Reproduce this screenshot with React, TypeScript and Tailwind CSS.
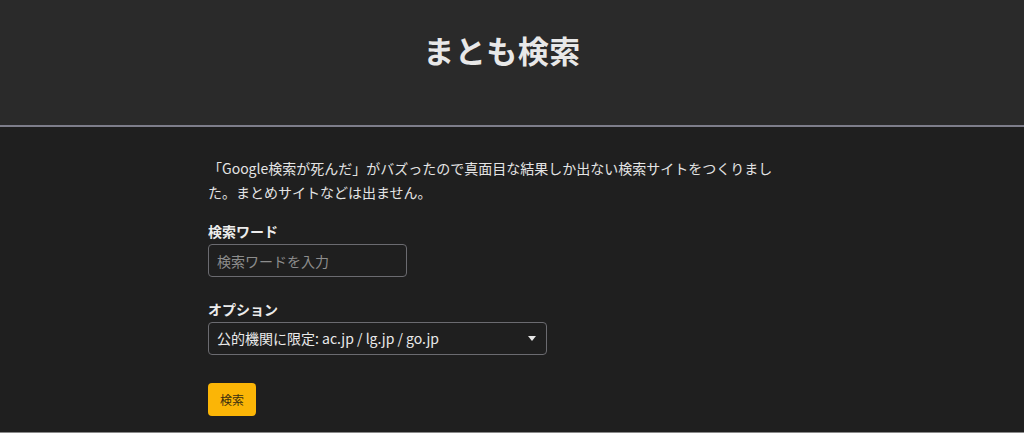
import { useState } from 'react';

const font = { fontFamily: '"Noto Sans CJK JP", "Noto Sans", sans-serif' };

const App = () => {
  const [query, setQuery] = useState('');
  const [option, setOption] = useState('gov');

  return (
    <div className="flex h-screen flex-col bg-[#1f1f1f] text-[#e6e6e6]" style={font}>
      <header className="flex h-[127px] shrink-0 items-center justify-center border-b-2 border-[#7d7d8a] bg-[#2a2a2a] pb-[24px] pr-[20px]">
        <h1 className="text-[31px] font-bold tracking-[0.5px] text-[#e8e8e8]">まとも検索</h1>
      </header>

      <main className="flex-1">
        <div className="mx-auto w-[608px] pt-[29px]">
          <p className="max-w-[576px] text-[14px] leading-[24px] text-[#e4e4e4]">
            「Google検索が死んだ」がバズったので真面目な結果しか出ない検索サイトをつくりました。まとめサイトなどは出ません。
          </p>

          <form onSubmit={(e) => e.preventDefault()}>
            <label className="mt-[17px] block text-[14px] font-bold leading-[20px] text-[#ececec]">検索ワード</label>
            <input
              type="text"
              value={query}
              onChange={(e) => setQuery(e.target.value)}
              placeholder="検索ワードを入力"
              className="mt-[3px] h-[33px] w-[199px] rounded-[4px] border border-[#6b6b70] bg-[#1f1f1f] px-[8px] text-[14px] text-[#e6e6e6] outline-none placeholder:text-[#8d8d8d]"
            />

            <label className="mt-[22px] block text-[14px] font-bold leading-[20px] text-[#ececec]">オプション</label>
            <div className="relative mt-[3px] w-[339px]">
              <select
                value={option}
                onChange={(e) => setOption(e.target.value)}
                className="h-[33px] w-full appearance-none rounded-[4px] border border-[#6b6b70] bg-[#1f1f1f] pl-[8px] pr-[28px] text-[14px] text-[#eaeaea] outline-none"
                style={font}
              >
                <option value="gov">公的機関に限定: ac.jp / lg.jp / go.jp</option>
                <option value="all">すべて</option>
              </select>
              <svg className="pointer-events-none absolute right-[11px] top-[14px]" width="8" height="5" viewBox="0 0 8 5">
                <path d="M0 0h8L4 5z" fill="#e6e6e6" />
              </svg>
            </div>

            <button
              type="submit"
              className="mt-[28px] h-[33px] w-[48px] rounded-[4px] bg-[#fbb506] text-[12px] text-[#3a2e10]"
            >
              検索
            </button>
          </form>
        </div>
      </main>

      <div className="h-px shrink-0 bg-[#8a8a8a]" />
    </div>
  );
};

export default App;
